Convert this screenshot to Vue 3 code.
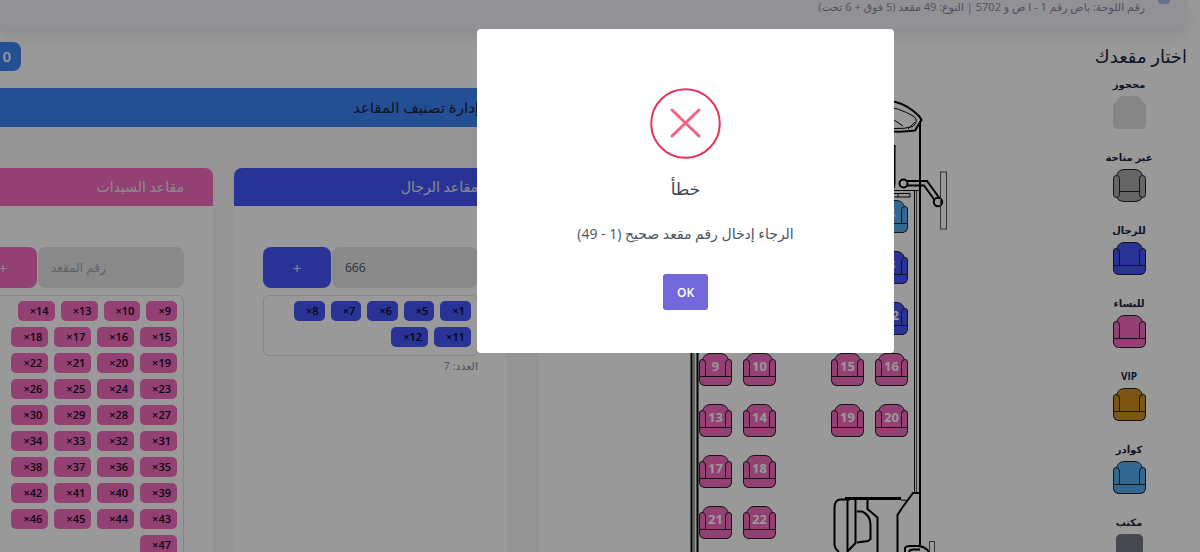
<template>
  <div class="seat-page" dir="rtl">
    <header class="trip-header">
      <span class="trip-icon"></span>
      <p class="trip-info">رقم اللوحة: باص رقم 1 - ا ص و 5702 | النوع: 49 مقعد (5 فوق + 6 تحت)</p>
    </header>

    <main class="content">
      <div class="title-row">
        <h2 class="page-title">اختار مقعدك</h2>
        <span class="counter">0</span>
      </div>

      <div class="columns">
        <ul class="legend">
          <li v-for="item in legend" :key="item.label" class="legend-item">
            <span class="legend-label">{{ item.label }}</span>
            <svg class="seat-icon" :class="item.type" viewBox="0 0 33 33">
              <path
                v-if="item.type === 'reserved'"
                d="M9 0H24Q28 1 29 5L33 9V28Q33 33 28 33H5Q0 33 0 28V9L4 5Q5 1 9 0Z"
              />
              <rect v-else-if="item.type === 'office'" x="3" width="27" height="33" rx="5" />
              <g v-else-if="item.type === 'unavailable'">
                <path d="M3.5 8Q4 1 11 .5H22Q29 1 29.5 8V28Q28 32 23 32.5H10Q5 32 3.5 28Z" />
                <path d="M6 22.5H27" />
                <rect x=".5" y="6.5" width="6" height="22" rx="3" />
                <rect x="26.5" y="6.5" width="6" height="22" rx="3" />
              </g>
              <g v-else>
                <path :d="seatBack" />
                <path :d="seatArms" />
                <path :d="seatBase" />
              </g>
            </svg>
          </li>
        </ul>

        <section class="bus-area">
          <div class="bus">
            <svg class="bus-outline" viewBox="689 71 232 481">
              <g class="line">
                <path d="M691.5 110V552M697.5 110V552" class="bold" />
                <path d="M694 110V552" class="thin" />
                <path d="M715 118Q805 80 894 101.5Q908 105 919 116L921.5 120L915 130.5Q905 132 894 131.5" class="bold" />
                <path d="M880 105Q900 108 914 116.5Q919 121 913 126.5Q905 129 894 128.5M894 120L903 126M908 129L915 122" />
                <path d="M920 121V545" class="bold" />
                <path d="M894.5 145V183Q894.5 188 892 190" class="bold" />
                <path d="M880 190.5H920M914.5 191V493M880 193.5H910V197H880M898 193.5V197" />
                <path d="M916.5 191V493" class="thin" />
                <path d="M907 181H927L939 197.5M907 185.5H924L934.5 200" class="bold" />
                <circle cx="903.5" cy="183.5" r="4" class="bold" />
                <circle cx="938" cy="202" r="4.2" class="bold" />
                <rect x="940.5" y="172" width="6" height="57" class="thin" />
                <path d="M920 493H913L902 508L897.5 515V552" class="bold" />
                <path d="M845 498.5H901" class="heavy" />
                <path d="M901 500L908 500.5" />
                <path d="M850 499.5H840Q834.5 500 834.5 508V545Q835 549 839 552" class="bold" />
                <path d="M847.5 499V552M855.5 499V543L848 551" class="bold" />
                <path d="M857 511.5H862Q870 515 870.5 524V539L868 541L857 542.5" class="bold" />
                <path d="M867.5 499V509L877.5 517.5V552" class="bold" />
                <path d="M905 552V548Q906 546 910 546H919Q926 547 929 552M909 552Q910 549 914 549.5H920" class="bold" />
                <rect x="929.5" y="541.5" width="5" height="16" class="thin" />
              </g>
            </svg>
            <div class="seats" dir="ltr">
              <template v-for="(row, r) in seatRows" :key="r">
                <template v-for="(seat, c) in row" :key="c">
                  <span v-if="!seat"></span>
                  <button v-else type="button" class="seat" :aria-label="'مقعد ' + seat">
                    <svg class="seat-icon" :class="seatType(seat)" viewBox="0 0 33 33">
                      <path :d="seatBack" />
                      <path :d="seatArms" />
                      <path :d="seatBase" />
                    </svg>
                    <span class="seat-number">{{ seat }}</span>
                  </button>
                </template>
              </template>
            </div>
          </div>
        </section>

        <section class="manager">
          <h3 class="manager-title">إدارة تصنيف المقاعد</h3>
          <div class="manager-body">
            <div v-for="group in groups" :key="group.type" class="card" :class="group.type">
              <h4 class="card-title">{{ group.title }}</h4>
              <div class="card-body">
                <div class="add-row">
                  <input
                    v-model="group.value"
                    type="text"
                    placeholder="رقم المقعد"
                    :aria-label="group.title"
                  >
                  <button type="button" class="add-btn" @click="addSeat(group)">+</button>
                </div>
                <div class="tags">
                  <span v-for="n in group.seats" :key="n" class="tag">
                    {{ n }}<button type="button" class="tag-remove" @click="removeSeat(group, n)">×</button>
                  </span>
                </div>
                <small class="count">العدد: {{ group.seats.length }}</small>
              </div>
            </div>
          </div>
        </section>
      </div>
    </main>

    <div v-if="showError" class="overlay">
      <div class="modal" role="dialog" aria-labelledby="modal-title">
        <svg class="error-icon" viewBox="0 0 71 71">
          <circle cx="35.5" cy="35.5" r="34.3" />
          <path d="M22 22L49 48M49 22L22 48" />
        </svg>
        <h2 id="modal-title" class="modal-title">خطأ</h2>
        <p class="modal-text">الرجاء إدخال رقم مقعد صحيح (1 - 49)</p>
        <button type="button" class="ok-btn" @click="showError = false">OK</button>
      </div>
    </div>
  </div>
</template>

<script setup>
import { ref, reactive } from 'vue'

const seatBack = 'M3.5 24V7Q5 1 11 .5H22Q28 1 29.5 7V24Z'
const seatArms = 'M.5 25V9Q.5 6.5 3 6.5Q6.5 6.5 6.5 10V24M32.5 25V9Q32.5 6.5 30 6.5Q26.5 6.5 26.5 10V24'
const seatBase = 'M.5 23.5H32.5V28Q32 32 28 32.5H5Q1 32 .5 28Z'

const legend = [
  { label: 'محجوز', type: 'reserved' },
  { label: 'غير متاحة', type: 'unavailable' },
  { label: 'للرجال', type: 'men' },
  { label: 'للنساء', type: 'women' },
  { label: 'VIP', type: 'vip' },
  { label: 'كوادر', type: 'crew' },
  { label: 'مكتب', type: 'office' }
]

const seatRows = [
  [1, 2, null, 3, 4],
  [5, 6, null, 7, 8],
  [null, null, null, 11, 12],
  [9, 10, null, 15, 16],
  [13, 14, null, 19, 20],
  [17, 18, null, null, null],
  [21, 22, null, null, null]
]

const groups = reactive([
  {
    type: 'men',
    title: 'مقاعد الرجال',
    value: '666',
    seats: [1, 5, 6, 7, 8, 11, 12]
  },
  {
    type: 'women',
    title: 'مقاعد السيدات',
    value: '',
    seats: [9, 10, ...Array.from({ length: 35 }, (_, i) => i + 13)]
  }
])

const showError = ref(true)

function seatType(seat) {
  const group = groups.find(g => g.seats.includes(seat))
  return group ? group.type : 'crew'
}

function addSeat(group) {
  const n = Number(group.value)
  if (!Number.isInteger(n) || n < 1 || n > 49) {
    showError.value = true
    return
  }
  if (!group.seats.includes(n)) {
    group.seats.push(n)
  }
  group.value = ''
}

function removeSeat(group, n) {
  group.seats = group.seats.filter(s => s !== n)
}
</script>

<style>
body {
  background: #fff;
}
</style>

<style scoped>
.seat-page {
  height: 100vh;
  overflow: hidden;
  font-family: "Open Sans", "DejaVu Sans", sans-serif;
  color: #1a2340;
}

.seat-page * {
  box-sizing: border-box;
}

h2, h3, h4, p {
  margin: 0;
}

button, input {
  font-family: inherit;
  border: none;
}

button {
  cursor: pointer;
}

.trip-header {
  display: flex;
  align-items: flex-start;
  gap: 13px;
  margin-right: 13px;
  padding: 0 17px 15px 0;
  background: #f4f2fb;
  border-radius: 0 0 12px 0;
  box-shadow: 0 6px 16px rgba(0, 0, 0, 0.1);
}

.trip-icon {
  width: 12px;
  height: 12px;
  margin-top: -8px;
  border-radius: 3px;
  background: #a9bdf5;
}

.trip-info {
  font-size: 11px;
  line-height: 14px;
  color: #8a8798;
}

.content {
  margin: 13px 13px 0 -92px;
}

.title-row {
  display: flex;
  justify-content: space-between;
  align-items: center;
}

.page-title {
  font-size: 18px;
  line-height: 29px;
  font-weight: 400;
}

.counter {
  width: 113px;
  padding-right: 10px;
  background: #3f84f7;
  border-radius: 8px;
  color: #fff;
  font-size: 15px;
  font-weight: 600;
  line-height: 29px;
}

.columns {
  display: grid;
  grid-template-columns: 116px minmax(0, 532fr) minmax(0, 631fr);
}

.legend {
  list-style: none;
  margin: 0;
  padding: 3px 0 0;
}

.legend-item {
  display: flex;
  flex-direction: column;
  align-items: center;
  gap: 2px;
  margin-bottom: 18px;
}

.legend-label {
  font-size: 10px;
  line-height: 20px;
  font-weight: 700;
}

.seat-icon {
  display: block;
  width: 33px;
  height: 33px;
  stroke: #222;
  stroke-width: 1;
}

.seat-icon.men { fill: #4356f8; }
.seat-icon.women { fill: #f56bbf; }
.seat-icon.vip { fill: #cf8c20; }
.seat-icon.crew { fill: #56b0f0; }
.seat-icon.unavailable { fill: #a8a8a8; }
.seat-icon.reserved { fill: #dedede; stroke: none; }
.seat-icon.office { fill: #747882; stroke: none; }

.bus-area {
  display: flex;
  justify-content: center;
  align-items: flex-start;
}

.bus {
  display: grid;
  width: 232px;
}

.bus-outline {
  grid-area: 1 / 1;
  width: 232px;
  height: 481px;
  overflow: visible;
}

.line {
  fill: none;
  stroke: #000;
  stroke-width: 1;
}

.line .bold { stroke-width: 2; }
.line .heavy { stroke-width: 3; }
.line .thin { stroke: #555; stroke-width: 1; }

.seats {
  grid-area: 1 / 1;
  display: grid;
  grid-template-columns: repeat(5, 33px);
  grid-auto-rows: 33px;
  column-gap: 11px;
  row-gap: 18px;
  align-content: start;
  justify-content: start;
  padding: 129px 0 0 10px;
}

.seat {
  display: grid;
  padding: 0;
  background: none;
}

.seat > * {
  grid-area: 1 / 1;
}

.seat-number {
  color: #fff;
  font-size: 13px;
  line-height: 26px;
  font-weight: 700;
  text-align: center;
}

.manager {
  margin-top: 17px;
  background: #f7f7f7;
}

.manager-title {
  padding: 0 60px;
  background: #3f84f7;
  font-size: 15px;
  line-height: 39px;
  font-weight: 400;
}

.manager-body {
  display: grid;
  grid-template-columns: repeat(2, minmax(0, 1fr));
  gap: 21px;
  padding: 41px 32px;
}

.card {
  background: #fff;
  border-radius: 8px;
}

.card-title {
  padding: 0 29px;
  border-radius: 8px 8px 0 0;
  color: #e8e8f0;
  font-size: 14px;
  line-height: 38px;
  font-weight: 400;
}

.men .card-title, .men .tag, .men .add-btn {
  background: #4356f8;
}

.women .card-title, .women .tag, .women .add-btn {
  background: #f56bbf;
}

.card-body {
  padding: 41px 29px 20px;
}

.add-row {
  display: flex;
  gap: 1px;
  margin-bottom: 7px;
}

.add-row input {
  flex: 1;
  min-width: 0;
  height: 41px;
  padding: 0 13px;
  border-radius: 8px;
  background: #e4e4e5;
  color: #4b5563;
  font-size: 12px;
  text-align: left;
}

.add-row input::placeholder {
  color: #9ca3af;
  opacity: 1;
}

.add-btn {
  width: 68px;
  border-radius: 8px;
  color: #e8e8f0;
  font-size: 15px;
}

.tags {
  display: flex;
  flex-wrap: wrap;
  align-content: flex-start;
  gap: 6px;
  min-height: 61px;
  padding: 5px 6px 5px 16px;
  border: 1px solid #dcdfe3;
  border-radius: 6px;
}

.tag {
  height: 20px;
  padding: 0 6px 0 12px;
  border-radius: 5px;
  color: #100820;
  font-size: 11px;
  line-height: 20px;
  font-weight: 600;
}

.tag-remove {
  padding: 0;
  background: none;
  color: inherit;
  font-size: 11px;
  font-weight: 600;
}

.count {
  display: block;
  font-size: 11px;
  line-height: 20px;
  color: #858b98;
}

.overlay {
  position: fixed;
  inset: 0;
  display: flex;
  justify-content: center;
  align-items: flex-start;
  padding: 29px 0 0 171px;
  background: rgba(0, 0, 0, 0.4);
}

.modal {
  display: flex;
  flex-direction: column;
  align-items: center;
  width: 417px;
  padding: 59px 20px 43px;
  background: #fff;
  border-radius: 4px;
}

.error-icon {
  width: 71px;
  height: 71px;
  fill: none;
  stroke: #e0365a;
  stroke-width: 2;
}

.error-icon path {
  stroke: #f0647f;
  stroke-width: 3;
  stroke-linecap: round;
}

.modal-title {
  margin-top: 15px;
  color: #41464f;
  font-size: 17px;
  line-height: 30px;
  font-weight: 400;
}

.modal-text {
  margin-top: 18px;
  color: #4b5260;
  font-size: 14px;
  line-height: 24px;
}

.ok-btn {
  height: 36px;
  margin-top: 28px;
  padding: 0 14px;
  border-radius: 3px;
  background: #7367dc;
  color: #fff;
  font-size: 12px;
  font-weight: 600;
}
</style>
